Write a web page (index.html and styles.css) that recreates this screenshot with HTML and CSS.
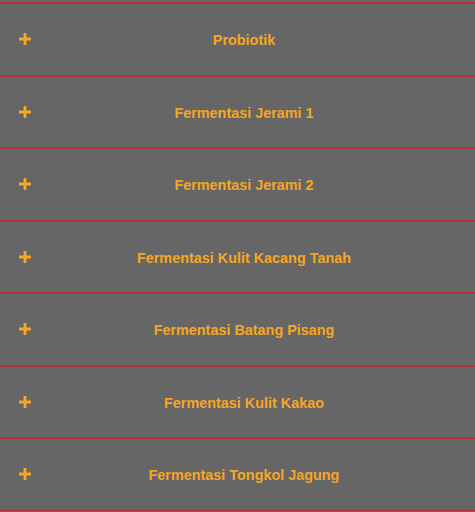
FILE: index.html
```html
<!DOCTYPE html>
<html>
<head>
    <title>Fermentasi</title>
    <link rel="stylesheet" href="styles.css">
</head>
<body>
    <div class="accordion">
        <div class="item"><svg class="plus" viewBox="0 0 12 12"><path d="M4.6 0h2.8v4.6h4.6v2.8h-4.6v4.6h-2.8v-4.6h-4.6v-2.8h4.6z"/></svg><span class="title">Probiotik</span></div>
        <div class="item"><svg class="plus" viewBox="0 0 12 12"><path d="M4.6 0h2.8v4.6h4.6v2.8h-4.6v4.6h-2.8v-4.6h-4.6v-2.8h4.6z"/></svg><span class="title">Fermentasi Jerami 1</span></div>
        <div class="item"><svg class="plus" viewBox="0 0 12 12"><path d="M4.6 0h2.8v4.6h4.6v2.8h-4.6v4.6h-2.8v-4.6h-4.6v-2.8h4.6z"/></svg><span class="title">Fermentasi Jerami 2</span></div>
        <div class="item"><svg class="plus" viewBox="0 0 12 12"><path d="M4.6 0h2.8v4.6h4.6v2.8h-4.6v4.6h-2.8v-4.6h-4.6v-2.8h4.6z"/></svg><span class="title">Fermentasi Kulit Kacang Tanah</span></div>
        <div class="item"><svg class="plus" viewBox="0 0 12 12"><path d="M4.6 0h2.8v4.6h4.6v2.8h-4.6v4.6h-2.8v-4.6h-4.6v-2.8h4.6z"/></svg><span class="title">Fermentasi Batang Pisang</span></div>
        <div class="item"><svg class="plus" viewBox="0 0 12 12"><path d="M4.6 0h2.8v4.6h4.6v2.8h-4.6v4.6h-2.8v-4.6h-4.6v-2.8h4.6z"/></svg><span class="title">Fermentasi Kulit Kakao</span></div>
        <div class="item"><svg class="plus" viewBox="0 0 12 12"><path d="M4.6 0h2.8v4.6h4.6v2.8h-4.6v4.6h-2.8v-4.6h-4.6v-2.8h4.6z"/></svg><span class="title">Fermentasi Tongkol Jagung</span></div>
    </div>
</body>
</html>
```

FILE: styles.css
```css
body {
    margin: 0;
    background: #666666;
    font-family: 'Liberation Sans', Arial, sans-serif;
    overflow: hidden;
}
.accordion {
    margin-top: 2px;
    border-top: 1px solid #b3303a;
}
.item {
    display: flex;
    align-items: center;
    height: 70.5px;
    border-top: 1px solid #b3303a;
    border-bottom: 1px solid #b3303a;
    color: #f5a623;
    font-weight: bold;
    font-size: 14.4px;
}
.plus {
    width: 12px;
    height: 12px;
    margin-left: 19px;
    fill: #f5a623;
    flex: none;
}
.title {
    flex: 1;
    text-align: center;
    padding-right: 18px;
    padding-top: 2px;
}
```
